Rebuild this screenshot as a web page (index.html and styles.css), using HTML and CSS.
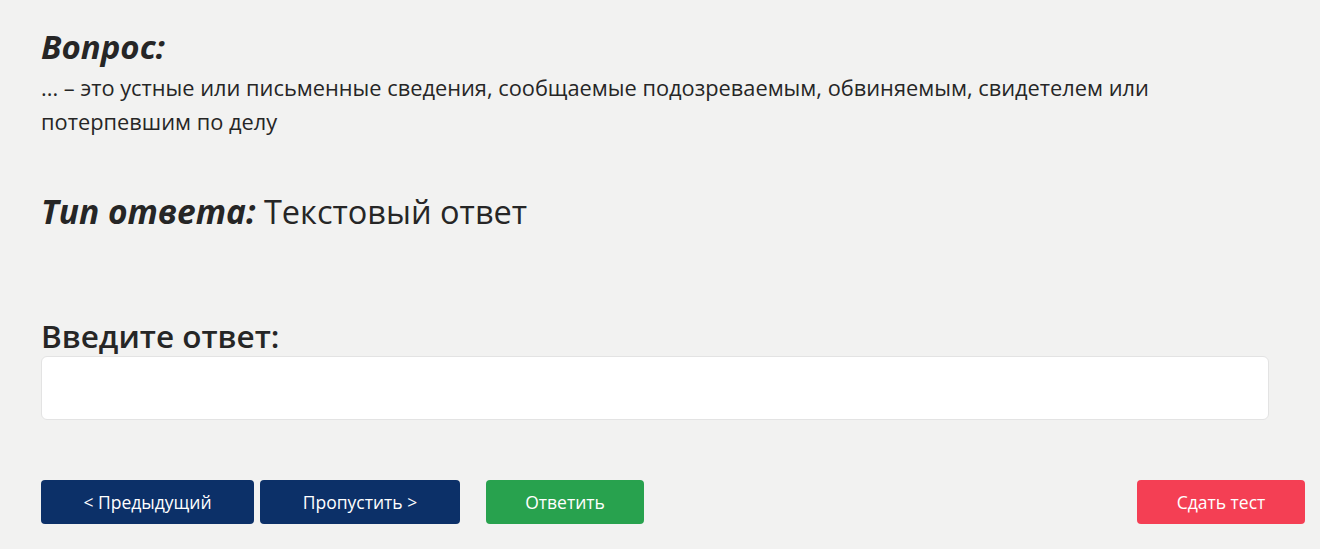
FILE: index.html
```html
<!DOCTYPE html>
<html lang="ru">
<head>
    <meta charset="UTF-8">
    <meta name="viewport" content="width=device-width, initial-scale=1.0">
    <title>Тест</title>
    <link rel="stylesheet" href="styles.css">
</head>
<body>
    <div class="container">
        <div class="question">
            <h2 class="question__title">Вопрос:</h2>
            <p class="question__text">... – это устные или письменные сведения, сообщаемые подозреваемым, обвиняемым, свидетелем или потерпевшим по делу</p>
        </div>
        <div class="answer-type">
            <span class="answer-type__label">Тип ответа:</span>
            <span class="answer-type__value">Текстовый ответ</span>
        </div>
        <form class="form" id="answerForm">
            <label for="answer" class="form__label">Введите ответ:</label>
            <input type="text" id="answer" class="form__input">
            <div class="controls">
                <button type="button" class="button button--nav button--prev">&lt; Предыдущий</button>
                <button type="button" class="button button--nav button--skip">Пропустить &gt;</button>
                <button type="submit" class="button button--answer">Ответить</button>
                <button type="button" class="button button--finish">Сдать тест</button>
            </div>
        </form>
    </div>
</body>
</html>
```

FILE: styles.css
```css
:root {
    --color-bg: #f2f2f1;
    --color-text: #262626;
    --color-navy: #0c3068;
    --color-green: #28a24e;
    --color-red: #f43f54;
}

body {
    font-family: 'Open Sans', 'Noto Sans', sans-serif;
    background-color: var(--color-bg);
    color: var(--color-text);
    margin: 0;
}

.container {
    padding: 25px 15px 0 41px;
}

.question__title {
    font-size: 33px;
    font-style: italic;
    font-weight: 700;
    line-height: 44px;
    margin: 0;
}

.question__text {
    font-size: 21.8px;
    line-height: 34px;
    margin: 2px 0 0;
    max-width: 1140px;
}

.answer-type {
    margin-top: 50px;
    font-size: 32.5px;
    line-height: 44px;
}

.answer-type__label {
    font-size: 33.5px;
    font-style: italic;
    font-weight: 700;
}

.form {
    margin-top: 82px;
}

.form__label {
    display: block;
    font-size: 31.5px;
    font-weight: 600;
    line-height: 40px;
}

.form__input {
    display: block;
    box-sizing: border-box;
    width: 1228px;
    height: 64px;
    border: 1px solid #e3e3e3;
    border-radius: 6px;
    background-color: #fff;
    font-size: 18px;
    padding: 0 14px;
}

.controls {
    display: flex;
    margin-top: 60px;
}

.button {
    height: 44px;
    border: none;
    border-radius: 4px;
    color: #fff;
    font-family: inherit;
    font-size: 17.5px;
    cursor: pointer;
}

.button--nav {
    background-color: var(--color-navy);
}

.button--prev {
    width: 213px;
    margin-right: 6px;
}

.button--skip {
    width: 200px;
    margin-right: 26px;
}

.button--answer {
    width: 158px;
    background-color: var(--color-green);
}

.button--finish {
    width: 168px;
    margin-left: auto;
    background-color: var(--color-red);
}
```
